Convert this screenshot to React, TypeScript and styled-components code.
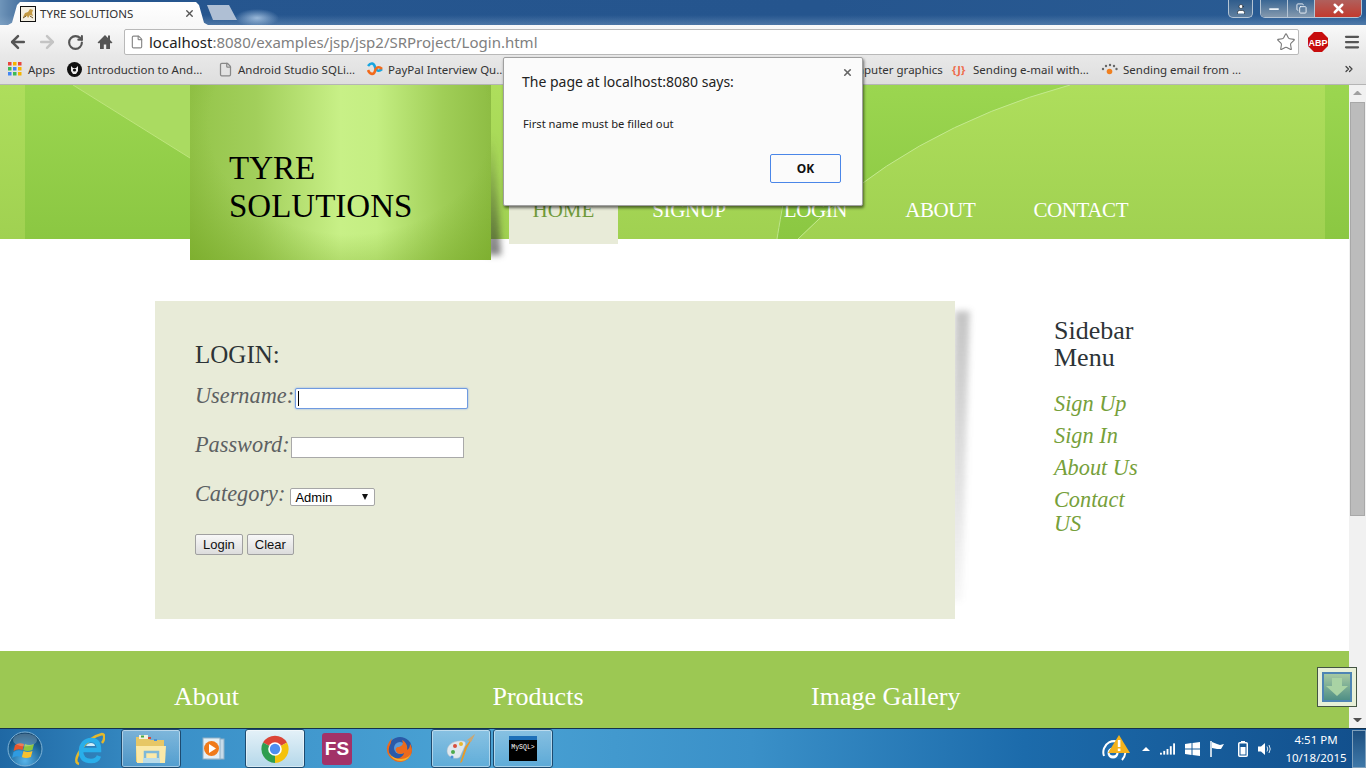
import React from "react";
import styled, { createGlobalStyle } from "styled-components";
import { ArrowLeft, ArrowRight, RotateCw, File, Star, X, Minus, Copy, User, Menu, ChevronsRight } from "lucide-react";

const GlobalStyle = createGlobalStyle`
  html, body {
    margin: 0;
    padding: 0;
    overflow: hidden;
    background: #fff;
  }
  * { box-sizing: border-box; }
`;

const uiFont = `"Noto Sans", "Open Sans", sans-serif`;
const pageFont = `"Liberation Serif", "Times New Roman", serif`;
const formFont = `"Liberation Sans", Arial, sans-serif`;

const App: React.FC = () => {
  return (
    <Screen>
      <GlobalStyle />
      <TabStrip>
        <ActiveTab>
          <TomcatIcon />
          <TabTitle>TYRE SOLUTIONS</TabTitle>
          <TabClose>
            <X size={11} strokeWidth={3} />
          </TabClose>
        </ActiveTab>
        <NewTab />
        <WindowControls>
          <ProfileButton>
            <User size={12} fill="#fff" strokeWidth={1} />
          </ProfileButton>
          <CaptionGroup>
            <CaptionButton>
              <Minus size={14} strokeWidth={3} />
            </CaptionButton>
            <CaptionButton>
              <Copy size={11} strokeWidth={2} />
            </CaptionButton>
            <CloseButton>
              <X size={15} strokeWidth={4} />
            </CloseButton>
          </CaptionGroup>
        </WindowControls>
      </TabStrip>

      <Toolbar>
        <NavButton>
          <ArrowLeft size={20} strokeWidth={3} color="#555" />
        </NavButton>
        <NavButton>
          <ArrowRight size={20} strokeWidth={3} color="#c4c4c4" />
        </NavButton>
        <NavButton>
          <RotateCw size={17} strokeWidth={3} color="#555" />
        </NavButton>
        <NavButton>
          <HomeIcon />
        </NavButton>
        <Omnibox>
          <File size={14} color="#888" />
          <UrlText>
            localhost<UrlDim>:8080/examples/jsp/jsp2/SRProject/Login.html</UrlDim>
          </UrlText>
          <Star size={20} color="#777" strokeWidth={1.3} />
        </Omnibox>
        <AbpIcon />
        <MenuButton>
          <Menu size={18} strokeWidth={3} color="#555" />
        </MenuButton>
      </Toolbar>

      <BookmarksBar>
        <BookmarkGroup>
          <Bookmark $gap={6} $width={59}>
            <AppsIcon />
            Apps
          </Bookmark>
          <Bookmark $gap={5} $width={151}>
            <OwlIcon />
            Introduction to And...
          </Bookmark>
          <Bookmark $gap={5} $width={149}>
            <File size={15} color="#888" />
            Android Studio SQLi...
          </Bookmark>
          <Bookmark $gap={5} $width={140}>
            <PaypalIcon />
            PayPal Interview Qu...
          </Bookmark>
        </BookmarkGroup>
        <BookmarkGroup>
          <Bookmark $gap={5} $width={133}>
            <File size={15} color="#888" />
            Computer graphics
          </Bookmark>
          <Bookmark $gap={5} $width={149}>
            <JavaIcon>{"{J}"}</JavaIcon>
            Sending e-mail with...
          </Bookmark>
          <Bookmark $gap={5} $width={156}>
            <DotsIcon />
            Sending email from ...
          </Bookmark>
          <MoreBookmarks>
            <ChevronsRight size={12} strokeWidth={2.5} />
          </MoreBookmarks>
        </BookmarkGroup>
      </BookmarksBar>

      <Viewport>
        <Page>
          <Header>
            <HeaderArt />
            <Logo>
              <LogoText>TYRE SOLUTIONS</LogoText>
            </Logo>
            <Nav>
              <NavItem $active>HOME</NavItem>
              <NavItem>SIGNUP</NavItem>
              <NavItem>LOGIN</NavItem>
              <NavItem>ABOUT</NavItem>
              <NavItem>CONTACT</NavItem>
            </Nav>
          </Header>

          <Content>
            <Card>
              <CardTitle>LOGIN:</CardTitle>
              <FieldRow>
                <FieldLabel>Username:</FieldLabel>
                <TextInput $focused>
                  <Caret />
                </TextInput>
              </FieldRow>
              <FieldRow>
                <FieldLabel>Password:</FieldLabel>
                <TextInput />
              </FieldRow>
              <FieldRow>
                <FieldLabel>Category:</FieldLabel>
                <SelectBox>
                  Admin
                  <SelectArrow />
                </SelectBox>
              </FieldRow>
              <ButtonRow>
                <FormButton>Login</FormButton>
                <FormButton>Clear</FormButton>
              </ButtonRow>
            </Card>
            <Sidebar>
              <SidebarTitle>Sidebar Menu</SidebarTitle>
              <SidebarLink>Sign Up</SidebarLink>
              <SidebarLink>Sign In</SidebarLink>
              <SidebarLink>About Us</SidebarLink>
              <SidebarLink>Contact US</SidebarLink>
            </Sidebar>
          </Content>

          <Footer>
            <FooterHeading>About</FooterHeading>
            <FooterHeading>Products</FooterHeading>
            <FooterHeading>Image Gallery</FooterHeading>
          </Footer>
        </Page>
        <Scrollbar>
          <ScrollArrow $up />
          <ScrollTrack>
            <ScrollThumb />
          </ScrollTrack>
          <ScrollArrow />
        </Scrollbar>
        <BackToTop>
          <BackToTopInner>
            <svg width="24" height="20" viewBox="0 0 24 20">
              <path d="M7 1h10v8h6L12 19 1 9h6z" fill="#a9d3a4" />
            </svg>
          </BackToTopInner>
        </BackToTop>
      </Viewport>

      <Taskbar>
        <StartSlot $width={58}>
          <StartOrb />
        </StartSlot>
        <TaskSlot $width={62}>
          <IeIcon />
        </TaskSlot>
        <TaskSlot $width={62} $open>
          <FolderIcon />
        </TaskSlot>
        <TaskSlot $width={62}>
          <MediaIcon />
        </TaskSlot>
        <TaskSlot $width={62} $open $active>
          <ChromeIcon />
        </TaskSlot>
        <TaskSlot $width={62}>
          <FsIcon>FS</FsIcon>
        </TaskSlot>
        <TaskSlot $width={62}>
          <FirefoxIcon />
        </TaskSlot>
        <TaskSlot $width={62} $open>
          <PaintIcon />
        </TaskSlot>
        <TaskSlot $width={62} $open>
          <ConsoleIcon>MySQL&gt;</ConsoleIcon>
        </TaskSlot>
        <Tray>
          <WarningIcon />
          <TrayCaret />
          <SignalIcon />
          <WindowsFlagIcon />
          <FlagIcon />
          <BatteryIcon />
          <SpeakerIcon />
          <Clock>
            <span>4:51 PM</span>
            <span>10/18/2015</span>
          </Clock>
          <ShowDesktop />
        </Tray>
      </Taskbar>

      <Dialog>
        <DialogClose>
          <X size={11} strokeWidth={3.5} />
        </DialogClose>
        <DialogTitle>The page at localhost:8080 says:</DialogTitle>
        <DialogMessage>First name must be filled out</DialogMessage>
        <DialogActions>
          <OkButton>OK</OkButton>
        </DialogActions>
      </Dialog>
    </Screen>
  );
};

/* drawings */

const HeaderArt: React.FC = () => (
  <ArtSvg viewBox="0 0 1349 154" preserveAspectRatio="none">
    <defs>
      <linearGradient id="hdrBase" x1="0" y1="0" x2="0" y2="1">
        <stop offset="0" stopColor="#9bd650" />
        <stop offset="1" stopColor="#8bc742" />
      </linearGradient>
      <linearGradient id="hdrLight" x1="0" y1="0" x2="0" y2="1">
        <stop offset="0" stopColor="#aede5c" />
        <stop offset="1" stopColor="#a0d151" />
      </linearGradient>
    </defs>
    <rect width="1349" height="154" fill="url(#hdrBase)" />
    <path d="M73 0L190 73V0z" fill="#aadb61" />
    <path d="M73 0L190 73" stroke="#bde57c" strokeWidth="1" fill="none" />
    <path d="M491 0V154H777Q781 125 800 0z" fill="url(#hdrLight)" />
    <path d="M777 154Q780 135 790 80" stroke="#bfe58a" strokeWidth="1" fill="none" />
    <path d="M1070 0Q905 45 798 154H1325V0z" fill="url(#hdrLight)" />
    <path d="M1070 0Q905 45 798 154" stroke="#c3e98e" strokeWidth="1" fill="none" />
    <rect width="25" height="154" fill="url(#hdrLight)" />
    <rect x="1325" width="24" height="154" fill="url(#hdrBase)" />
  </ArtSvg>
);

const TomcatIcon: React.FC = () => (
  <svg width="16" height="16" viewBox="0 0 16 16">
    <rect x="0.5" y="0.5" width="15" height="15" fill="#f4efe2" stroke="#111" />
    <path d="M3 11l2-4 3-1 2-3 3 1-1 3 1 3-3-1-2 3-1-2z" fill="#c49a45" />
    <path d="M3 12l3-2M10 10l3 2" stroke="#6b5120" />
  </svg>
);

const HomeIcon: React.FC = () => (
  <svg width="16" height="16" viewBox="0 0 16 16">
    <path d="M8 1L0.5 8.500 2 9.500 3 8.700V15h3.800v-4.500h2.400V15H13V8.700l1 .800 1.500-1L13 6V1.500h-2v2.500z" fill="#555" />
  </svg>
);

const AbpIcon: React.FC = () => (
  <AbpSvg width="20" height="20" viewBox="0 0 20 20">
    <path d="M6 0h8l6 6v8l-6 6H6l-6-6V6z" fill="#c70d0d" />
    <text x="10" y="13.5" textAnchor="middle" fontFamily={formFont} fontSize="9" fontWeight="700" fill="#fff">
      ABP
    </text>
  </AbpSvg>
);

const AppsIcon: React.FC = () => {
  const colors = ["#e8453c", "#f5b400", "#e8453c", "#3cba54", "#4285f4", "#f5b400", "#4285f4", "#3cba54", "#f5b400"];
  return (
    <svg width="14" height="14" viewBox="0 0 14 14">
      {colors.map((c, i) => (
        <rect key={i} x={(i % 3) * 5} y={Math.floor(i / 3) * 5} width="3.5" height="3.5" fill={c} />
      ))}
    </svg>
  );
};

const OwlIcon: React.FC = () => (
  <svg width="15" height="15" viewBox="0 0 15 15">
    <circle cx="7.5" cy="7.5" r="7.5" fill="#111" />
    <path d="M4 4l2 2h3l2-2v5l-2 3H6L4 9z" fill="#eee" />
    <circle cx="7.5" cy="8" r="1.6" fill="#111" />
  </svg>
);

const PaypalIcon: React.FC = () => (
  <svg width="16" height="16" viewBox="0 0 16 16" fill="none" strokeWidth="2.6">
    <path d="M1 5c3-4 6-3 7 1s4 5 7 2" stroke="#19a5e0" />
    <path d="M1 9c2 5 6 5 7 1s4-5 7-2" stroke="#f26a1b" />
  </svg>
);

const DotsIcon: React.FC = () => (
  <svg width="17" height="12" viewBox="0 0 17 12">
    <circle cx="8.5" cy="8.5" r="2.8" fill="#f08020" />
    <circle cx="2" cy="6" r="1.2" fill="#666" />
    <circle cx="5" cy="3" r="1.2" fill="#666" />
    <circle cx="9" cy="2" r="1.2" fill="#666" />
    <circle cx="13" cy="3" r="1.2" fill="#666" />
    <circle cx="15.5" cy="6" r="1.2" fill="#666" />
  </svg>
);

const StartOrb: React.FC = () => (
  <svg width="36" height="36" viewBox="0 0 36 36">
    <defs>
      <radialGradient id="orb" cx="0.5" cy="0.85" r="0.9">
        <stop offset="0" stopColor="#58b4ea" />
        <stop offset="0.6" stopColor="#1a6396" />
        <stop offset="1" stopColor="#0f3a60" />
      </radialGradient>
    </defs>
    <circle cx="18" cy="18" r="17" fill="url(#orb)" stroke="#7fb4d8" />
    <path d="M8 14q4-3 9-1l-1.400 6q-5-2-9 1z" fill="#e8562a" />
    <path d="M18 13q4 2 9 0l-1.600 6q-5 2-9 0z" fill="#8cc63f" />
    <path d="M6.500 21q4-3 9-1l-1.400 6q-5-2-9 1z" fill="#2f9be0" />
    <path d="M16.500 20q4 2 9 0l-1.600 6q-5 2-9 0z" fill="#f7c12f" />
    <ellipse cx="18" cy="9" rx="12" ry="6.500" fill="#fff" opacity="0.22" />
  </svg>
);

const IeIcon: React.FC = () => (
  <svg width="32" height="34" viewBox="0 0 32 34" fill="none">
    <path d="M6 32C-3 30 12 6 29 2c3 0 3 5 0 9" stroke="#e4b82c" strokeWidth="2.400" />
    <path d="M9 18h17c0-7-3-10-8-10S8 12 8 19s4 10 10 10c4 0 7-2 8-5" stroke="#29aeea" strokeWidth="4.500" />
    <path d="M13 14c1-2 3-3 5-3s4 1 4 3z" fill="#cdeffc" />
  </svg>
);

const FolderIcon: React.FC = () => (
  <svg width="32" height="30" viewBox="0 0 32 30">
    <path d="M1 3h12l2 3h14v22H1z" fill="#e7c766" />
    <path d="M4 1h9v4H4z" fill="#f5f1dd" />
    <rect x="6" y="1.500" width="3" height="2" fill="#45a848" />
    <rect x="13" y="3" width="3" height="2" fill="#d34a3a" />
    <rect x="19" y="5" width="3" height="2" fill="#4b90d8" />
    <path d="M1 12h30l-1 17H2z" fill="#fbe9a8" />
    <path d="M10 24v-6h13v6" fill="none" stroke="#7eb8d8" strokeWidth="2.500" />
    <path d="M8 29v-5h17v5" fill="#b9dcea" />
  </svg>
);

const MediaIcon: React.FC = () => (
  <svg width="28" height="26" viewBox="0 0 28 26">
    <rect x="8" y="3" width="17" height="20" fill="#c7dbe9" stroke="#8fb0c6" />
    <rect x="4" y="2" width="17" height="21" fill="#e4eef5" stroke="#8fb0c6" />
    <circle cx="12.500" cy="12.500" r="7.500" fill="#f07a1a" />
    <path d="M10 8l7 4.500-7 4.500z" fill="#fff" />
  </svg>
);

const ChromeIcon: React.FC = () => (
  <svg width="28" height="28" viewBox="0 0 28 28">
    <path d="M14 14L2 7.500A14 14 0 0 1 26 7.500z" fill="#db4437" />
    <path d="M14 14L26 7.500A14 14 0 0 1 14 28z" fill="#f4c20d" />
    <path d="M14 14V28A14 14 0 0 1 2 7.500z" fill="#2e9e4f" />
    <circle cx="14" cy="14" r="6.800" fill="#fff" />
    <circle cx="14" cy="14" r="5.200" fill="#4d8ef0" />
  </svg>
);

const FirefoxIcon: React.FC = () => (
  <svg width="28" height="28" viewBox="0 0 28 28">
    <circle cx="15" cy="14" r="12" fill="#2a5aa8" />
    <circle cx="15" cy="13" r="6" fill="#5a9ad8" />
    <path d="M7 3c-2 3-6 7-5 13s7 11 13 11 12-5 12-12c0-2-1-5-2-6 0 3-1 5-3 6 1-4-1-8-5-10 2 4 0 6-3 7-3 0-4 2-3 4 1 3 5 4 8 2-1 4-5 6-9 5-5-1-7-6-6-10 0-2 2-4 2-6z" fill="#ec6a1c" />
    <path d="M4 18c2 5 7 8 12 8s8-3 10-7c-3 4-7 5-11 5s-8-2-11-6z" fill="#f5b32b" />
  </svg>
);

const PaintIcon: React.FC = () => (
  <svg width="32" height="32" viewBox="0 0 32 32">
    <path d="M2 18C2 11 10 7 18 8c3 .500 3 3 2 5l-5 11c-3 3-13 1-13-6z" fill="#dfe8ee" stroke="#aab8c2" strokeWidth="0.500" />
    <circle cx="8" cy="19" r="2" fill="#4eaa4e" />
    <circle cx="10" cy="13" r="2" fill="#d8503e" />
    <circle cx="16" cy="11" r="2" fill="#e8b830" />
    <circle cx="7" cy="24" r="1.500" fill="#4a90d8" />
    <path d="M30 1L22 15 17 29l-2 1 1-3 4-13z" fill="#e89a28" />
    <path d="M30 1l-4 8-4-2z" fill="#c9a878" />
  </svg>
);

const WarningIcon: React.FC = () => (
  <svg width="30" height="30" viewBox="0 0 30 30">
    <path d="M2 22a11 11 0 1 1 18 4" fill="#1f6db0" stroke="#fff" strokeWidth="2" />
    <circle cx="11" cy="19" r="5.500" fill="#fff" />
    <circle cx="11" cy="18" r="3.500" fill="#1f6db0" />
    <path d="M17 1l11 18H6z" fill="#f4b21b" />
    <rect x="15.800" y="6" width="2.600" height="7" fill="#fff" />
    <rect x="15.800" y="14.500" width="2.600" height="2.600" fill="#fff" />
  </svg>
);

const SignalIcon: React.FC = () => (
  <svg width="15" height="12" viewBox="0 0 16 12" fill="#fff">
    <rect x="0" y="10" width="2" height="2" />
    <rect x="3.500" y="8" width="2" height="4" />
    <rect x="7" y="6" width="2" height="6" />
    <rect x="10.500" y="3" width="2" height="9" />
    <rect x="14" y="0" width="2" height="12" />
  </svg>
);

const WindowsFlagIcon: React.FC = () => (
  <svg width="15" height="14" viewBox="0 0 15 14" fill="#fff">
    <path d="M0 2l6.500-1v5.500H0zM7.500 1L15 0v6.500H7.500zM0 7.500h6.500V13L0 12zM7.500 7.500H15V14l-7.500-1z" />
  </svg>
);

const FlagIcon: React.FC = () => (
  <FlagSvg width="15" height="16" viewBox="0 0 15 16">
    <path d="M1 0v16" stroke="#fff" strokeWidth="1.500" />
    <path d="M2 1l5 2 3 1 4-1-3 5H7L2 7z" fill="#fff" />
  </FlagSvg>
);

const BatteryIcon: React.FC = () => (
  <svg width="10" height="16" viewBox="0 0 10 16">
    <rect x="3" y="0" width="4" height="2" fill="#fff" />
    <rect x="0.750" y="1.750" width="8.500" height="13.500" rx="1" fill="none" stroke="#fff" strokeWidth="1.500" />
    <rect x="2.500" y="6" width="5" height="7.500" fill="#fff" />
  </svg>
);

const SpeakerIcon: React.FC = () => (
  <svg width="15" height="14" viewBox="0 0 15 14" fill="none">
    <path d="M0 4.500h3L7 1v12L3 9.500H0z" fill="#fff" />
    <path d="M9 4.500q1.500 2.500 0 5M11 3q2.500 4 0 8" stroke="#dbe8f3" strokeWidth="1" />
  </svg>
);

/* page shell */

const Screen = styled.div`
  position: relative;
  isolation: isolate;
  width: 1366px;
  height: 768px;
  display: flex;
  flex-direction: column;
  overflow: hidden;
  font-family: ${uiFont};
`;

const TabStrip = styled.div`
  height: 25px;
  flex: none;
  display: flex;
  align-items: flex-end;
  padding-left: 8px;
  background:
    radial-gradient(ellipse 22px 9px at 257px 18px, rgba(190, 215, 240, 0.75), transparent),
    linear-gradient(to bottom, transparent 60%, rgba(150, 180, 210, 0.35) 100%),
    linear-gradient(to right, #6f95ba 0, #5f86ae 8px, #26568f 40px, #25558e 60%, #2a5c94 100%);
`;

const ActiveTab = styled.div`
  width: 200px;
  height: 23px;
  flex: none;
  display: flex;
  align-items: center;
  gap: 4px;
  padding: 0 13px 0 12px;
  background: linear-gradient(#fff, #f8f8f8);
  clip-path: polygon(0 100%, 4px 90%, 9px 3px, 12px 0, 188px 0, 191px 3px, 196px 90%, 100% 100%);
`;

const TabTitle = styled.span`
  flex: 1;
  font-size: 11.5px;
  color: #333;
  white-space: nowrap;
`;

const TabClose = styled.span`
  display: flex;
  color: #555;
`;

const NewTab = styled.div`
  width: 30px;
  height: 15px;
  margin: 0 0 5px -1px;
  background: #afbfd4;
  clip-path: polygon(0 0, 22px 0, 100% 100%, 6px 100%);
`;

const WindowControls = styled.div`
  margin-left: auto;
  align-self: flex-start;
  display: flex;
  gap: 7px;
  padding-right: 4px;
`;

const ProfileButton = styled.div`
  width: 25px;
  height: 18px;
  display: flex;
  align-items: center;
  justify-content: center;
  background: linear-gradient(#2f5c8c, #5f7f9f);
  border: 1px solid #b4c4d4;
  border-top: 0;
  border-radius: 0 0 5px 5px;
`;

const CaptionGroup = styled.div`
  display: flex;
  height: 18px;
  border: 1px solid #b4c4d4;
  border-top: 0;
  border-radius: 0 0 5px 5px;
  overflow: hidden;
`;

const CaptionButton = styled.div`
  width: 27px;
  display: flex;
  align-items: center;
  justify-content: center;
  color: #eef3f8;
  background: linear-gradient(#3a6693, #8499ae);
  border-right: 1px solid #b4c4d4;
`;

const CloseButton = styled.div`
  width: 46px;
  display: flex;
  align-items: center;
  justify-content: center;
  color: #fff;
  background: linear-gradient(#b0605c, #c23a2e);
`;

const Toolbar = styled.div`
  height: 31px;
  flex: none;
  display: flex;
  align-items: center;
  padding: 3px 0 0 3px;
  background: linear-gradient(#f9f9f9, #e8e8e8);
`;

const NavButton = styled.div`
  width: 29px;
  display: flex;
  justify-content: center;
`;

const Omnibox = styled.div`
  width: 1175px;
  height: 26px;
  margin-left: 5px;
  display: flex;
  align-items: center;
  padding: 0 2px 0 5px;
  background: #fff;
  border: 1px solid #b9b9b9;
  border-radius: 2px;
`;

const UrlText = styled.span`
  flex: 1;
  margin-left: 5px;
  font-family: ${uiFont};
  font-size: 15px;
  color: #222;
`;

const UrlDim = styled.span`
  color: #808080;
`;

const AbpSvg = styled.svg`
  margin-left: 9px;
`;

const MenuButton = styled.div`
  margin-left: 15px;
  display: flex;
`;

const BookmarksBar = styled.div`
  height: 29px;
  flex: none;
  display: flex;
  justify-content: space-between;
  align-items: center;
  padding: 0 11px 2px 8px;
  background: linear-gradient(#e8e8e8, #dedede);
  border-bottom: 1px solid #b5b5b5;
`;

const BookmarkGroup = styled.div`
  display: flex;
  align-items: center;
`;

const Bookmark = styled.div<{ $gap: number; $width: number }>`
  width: ${(p) => p.$width}px;
  display: flex;
  align-items: center;
  gap: ${(p) => p.$gap}px;
  font-size: 11.5px;
  color: #333;
  white-space: nowrap;
`;

const JavaIcon = styled.span`
  width: 16px;
  font-size: 11px;
  font-weight: 700;
  color: #ee6a4a;
`;

const MoreBookmarks = styled.div`
  display: flex;
  margin-left: 86px;
  color: #444;
`;

const Viewport = styled.div`
  position: relative;
  flex: 1;
  min-height: 0;
  display: flex;
`;

const Page = styled.div`
  width: 1349px;
  flex: none;
  display: flex;
  flex-direction: column;
  font-family: ${pageFont};
  overflow: hidden;
`;

const Header = styled.header`
  position: relative;
  z-index: 1;
  height: 154px;
  flex: none;
  display: flex;
  padding-left: 190px;
`;

const ArtSvg = styled.svg`
  position: absolute;
  z-index: -2;
  inset: 0;
  width: 100%;
  height: 100%;
`;

const Logo = styled.div`
  position: relative;
  width: 301px;
  height: 175px;
  flex: none;
  display: flex;
  align-items: flex-end;
  padding: 0 60px 35px 39px;
  background:
    radial-gradient(ellipse 85% 115% at 53% 22%, transparent 55%, rgba(118, 168, 38, 0.9) 100%),
    linear-gradient(to right, #94c44a 0, #a2cf5b 22%, #c8f087 50%, #c4ee82 62%, #a0ce57 84%, #8ebd44 100%);

  &::after {
    content: "";
    position: absolute;
    z-index: -1;
    right: -7px;
    bottom: 5px;
    width: 14px;
    height: 120px;
    background: linear-gradient(to bottom, transparent, rgba(40, 40, 40, 0.6));
    filter: blur(3px);
    transform: skewX(3deg);
  }
`;

const LogoText = styled.h1`
  margin: 0;
  font-size: 33px;
  font-weight: 400;
  line-height: 38px;
  color: #000;
`;

const Nav = styled.nav`
  position: relative;
  align-self: flex-start;
  height: 159px;
  margin-left: 18px;
  display: flex;
  align-items: flex-start;
`;

const NavItem = styled.div<{ $active?: boolean }>`
  height: 54px;
  margin: 105px 11px 0 0;
  padding: 8px 23.5px 0;
  font-size: 21px;
  line-height: 24px;
  letter-spacing: ${(p) => (p.$active ? "0" : "-0.4px")};
  color: ${(p) => (p.$active ? "#6f9a3a" : "#fff")};
  background: ${(p) => (p.$active ? "#e8ebd8" : "transparent")};
`;

const Content = styled.main`
  flex: none;
  height: 412px;
  display: flex;
  padding: 62px 0 0 155px;
`;

const Card = styled.section`
  position: relative;
  width: 800px;
  height: 318px;
  flex: none;
  padding: 39px 40px 0;
  background: #e8ebd8;

  &::after {
    content: "";
    position: absolute;
    z-index: -1;
    top: 10px;
    right: -11px;
    width: 15px;
    height: 290px;
    background: linear-gradient(to bottom, rgba(60, 60, 60, 0.3), rgba(60, 60, 60, 0.04));
    filter: blur(3px);
    transform: skewX(-1.5deg);
  }
`;

const CardTitle = styled.h2`
  margin: 0;
  height: 42px;
  font-size: 25px;
  font-weight: 400;
  line-height: 30px;
  color: #2d3336;
`;

const FieldRow = styled.div`
  height: 49px;
  display: flex;
  align-items: flex-start;
  gap: 1px;
  padding-top: 1px;
`;

const FieldLabel = styled.label`
  font-size: 22.3px;
  font-style: italic;
  line-height: 26px;
  color: #5c6062;
  white-space: nowrap;
`;

const TextInput = styled.div<{ $focused?: boolean }>`
  width: 173px;
  height: 21px;
  margin-top: 5px;
  display: flex;
  align-items: center;
  padding-left: 2px;
  background: #fff;
  border: 1px solid ${(p) => (p.$focused ? "#6f9ae0" : "#a9a9a9")};
  border-radius: ${(p) => (p.$focused ? "2px" : "0")};
  box-shadow: ${(p) => (p.$focused ? "0 0 2px #7aa3e8" : "none")};
`;

const Caret = styled.span`
  width: 1px;
  height: 15px;
  background: #000;
`;

const SelectBox = styled.div`
  position: relative;
  width: 85px;
  height: 18px;
  margin: 7px 0 0 4px;
  padding-left: 4px;
  font-family: ${formFont};
  font-size: 13px;
  line-height: 17px;
  color: #000;
  background: #fff;
  border: 1px solid #a6a6a6;
  border-radius: 2px;
`;

const SelectArrow = styled.span`
  position: absolute;
  top: 5px;
  right: 6px;
  border-left: 3.5px solid transparent;
  border-right: 3.5px solid transparent;
  border-top: 6px solid #111;
`;

const ButtonRow = styled.div`
  display: flex;
  gap: 4px;
  margin-top: 5px;
`;

const FormButton = styled.button`
  height: 21px;
  padding: 0 7px;
  font-family: ${formFont};
  font-size: 13px;
  color: #111;
  background: linear-gradient(#f8f8f8, #dcdcdc);
  border: 1px solid #a0a0a0;
  border-radius: 2px;
`;

const Sidebar = styled.aside`
  width: 90px;
  margin-left: 99px;
  padding-top: 16px;
`;

const SidebarTitle = styled.h3`
  margin: 0 0 21px;
  font-size: 26px;
  font-weight: 400;
  line-height: 27px;
  color: #2d3336;
`;

const SidebarLink = styled.div`
  margin-bottom: 8px;
  font-size: 22.3px;
  font-style: italic;
  line-height: 24px;
  color: #76a03a;
`;

const Footer = styled.footer`
  flex: 1;
  display: flex;
  padding: 31px 0 0 174px;
  background: #9cc853;
`;

const FooterHeading = styled.h4`
  width: 318.5px;
  margin: 0;
  font-size: 26px;
  font-weight: 400;
  line-height: 30px;
  color: #fff;
`;

const Scrollbar = styled.div`
  width: 17px;
  flex: none;
  display: flex;
  flex-direction: column;
  background: #f1f1f1;
`;

const ScrollArrow = styled.div<{ $up?: boolean }>`
  flex: none;
  width: 9px;
  height: 4px;
  align-self: center;
  border-left: 4px solid transparent;
  border-right: 4px solid transparent;
  ${(p) =>
    p.$up
      ? "margin: 6px 4px 7px; border-bottom: 4px solid #a0a0a0;"
      : "margin: 0 4px 6px; border-top: 4px solid #505050;"}
`;

const ScrollTrack = styled.div`
  flex: 1;
  padding: 0 1px;
`;

const ScrollThumb = styled.div`
  height: 414px;
  background: #bcbcbc;
  border: 1px solid #a8a8a8;
`;

const BackToTop = styled.div`
  position: absolute;
  z-index: 2;
  top: 582px;
  right: 9px;
  width: 40px;
  height: 40px;
  padding: 4px;
  background: #e8f0d8;
  border: 1px solid #445544;
`;

const BackToTopInner = styled.div`
  width: 100%;
  height: 100%;
  display: flex;
  align-items: center;
  justify-content: center;
  background: linear-gradient(#a6c9a2, #4f8f86);
  border: 2px solid #4e85b4;
`;

const Taskbar = styled.div`
  height: 40px;
  flex: none;
  display: flex;
  align-items: center;
  background: linear-gradient(to right, #1f68a4 0, #3a90c8 12%, #4aa2d4 35%, #3a90c8 55%, #1c6bab 75%, #124f8c 100%);
  border-top: 1px solid #15324c;
`;

const TaskSlot = styled.div<{ $width: number; $open?: boolean; $active?: boolean }>`
  width: ${(p) => p.$width}px;
  height: 39px;
  flex: none;
  display: flex;
  align-items: center;
  justify-content: center;
  ${(p) =>
    p.$open &&
    `
    margin: 0 1px;
    width: ${p.$width - 2}px;
    border: 1px solid #1d4b70;
    border-radius: 3px;
    box-shadow: inset 0 0 0 1px rgba(255, 255, 255, 0.45);
    background: ${
      p.$active
        ? "linear-gradient(#e4f1f8, #b5d8ea)"
        : "linear-gradient(rgba(255,255,255,0.35), rgba(255,255,255,0.12))"
    };
  `}
`;

const StartSlot = styled(TaskSlot)`
  padding-right: 8px;
`;

const FsIcon = styled.div`
  width: 30px;
  height: 32px;
  display: flex;
  align-items: center;
  justify-content: center;
  font-family: ${formFont};
  font-size: 19px;
  font-weight: 700;
  color: #fff;
  background: #a23268;
  border-radius: 3px;
`;

const ConsoleIcon = styled.div`
  width: 28px;
  height: 25px;
  padding-top: 5px;
  font-family: "Liberation Mono", monospace;
  font-size: 6.5px;
  line-height: 14px;
  text-align: center;
  color: #fff;
  background: linear-gradient(#1d6fb8 0 4px, #000 4px);
  white-space: nowrap;
  overflow: hidden;
`;

const Tray = styled.div`
  margin-left: auto;
  height: 100%;
  display: flex;
  align-items: center;
  gap: 10px;
`;

const FlagSvg = styled.svg`
  margin-right: 3px;
`;

const TrayCaret = styled.span`
  border-left: 4px solid transparent;
  border-right: 4px solid transparent;
  border-bottom: 4px solid #fff;
`;

const Clock = styled.div`
  width: 66px;
  margin-right: -7px;
  display: flex;
  flex-direction: column;
  align-items: center;
  gap: 3px;
  font-size: 11.5px;
  line-height: 15px;
  color: #fff;
  white-space: nowrap;
`;

const ShowDesktop = styled.div`
  width: 14px;
  height: 38px;
  background: linear-gradient(#1d4f80, #3f78a8);
  border: 1px solid #7fa0bc;
`;

const Dialog = styled.div`
  position: absolute;
  z-index: 3;
  top: 57px;
  left: 503px;
  width: 360px;
  height: 149px;
  padding: 15px 18px 0;
  background: #fbfbfb;
  border: 1px solid #a0a0a0;
  border-radius: 2px;
  box-shadow: 1px 2px 3px rgba(0, 0, 0, 0.55);
`;

const DialogClose = styled.span`
  position: absolute;
  top: 9px;
  right: 9px;
  display: flex;
  color: #666;
`;

const DialogTitle = styled.div`
  font-size: 14px;
  line-height: 18px;
  color: #222;
`;

const DialogMessage = styled.div`
  margin-top: 25px;
  padding-left: 1px;
  font-size: 11.2px;
  line-height: 16px;
  color: #222;
`;

const DialogActions = styled.div`
  margin-top: 22px;
  display: flex;
  justify-content: flex-end;
  padding-right: 3px;
`;

const OkButton = styled.button`
  width: 71px;
  height: 29px;
  padding: 0;
  font-family: ${uiFont};
  font-size: 12px;
  font-weight: 700;
  color: #111;
  background: #fbfbfb;
  border: 1px solid #4a86e8;
  border-radius: 2px;
`;

export default App;
